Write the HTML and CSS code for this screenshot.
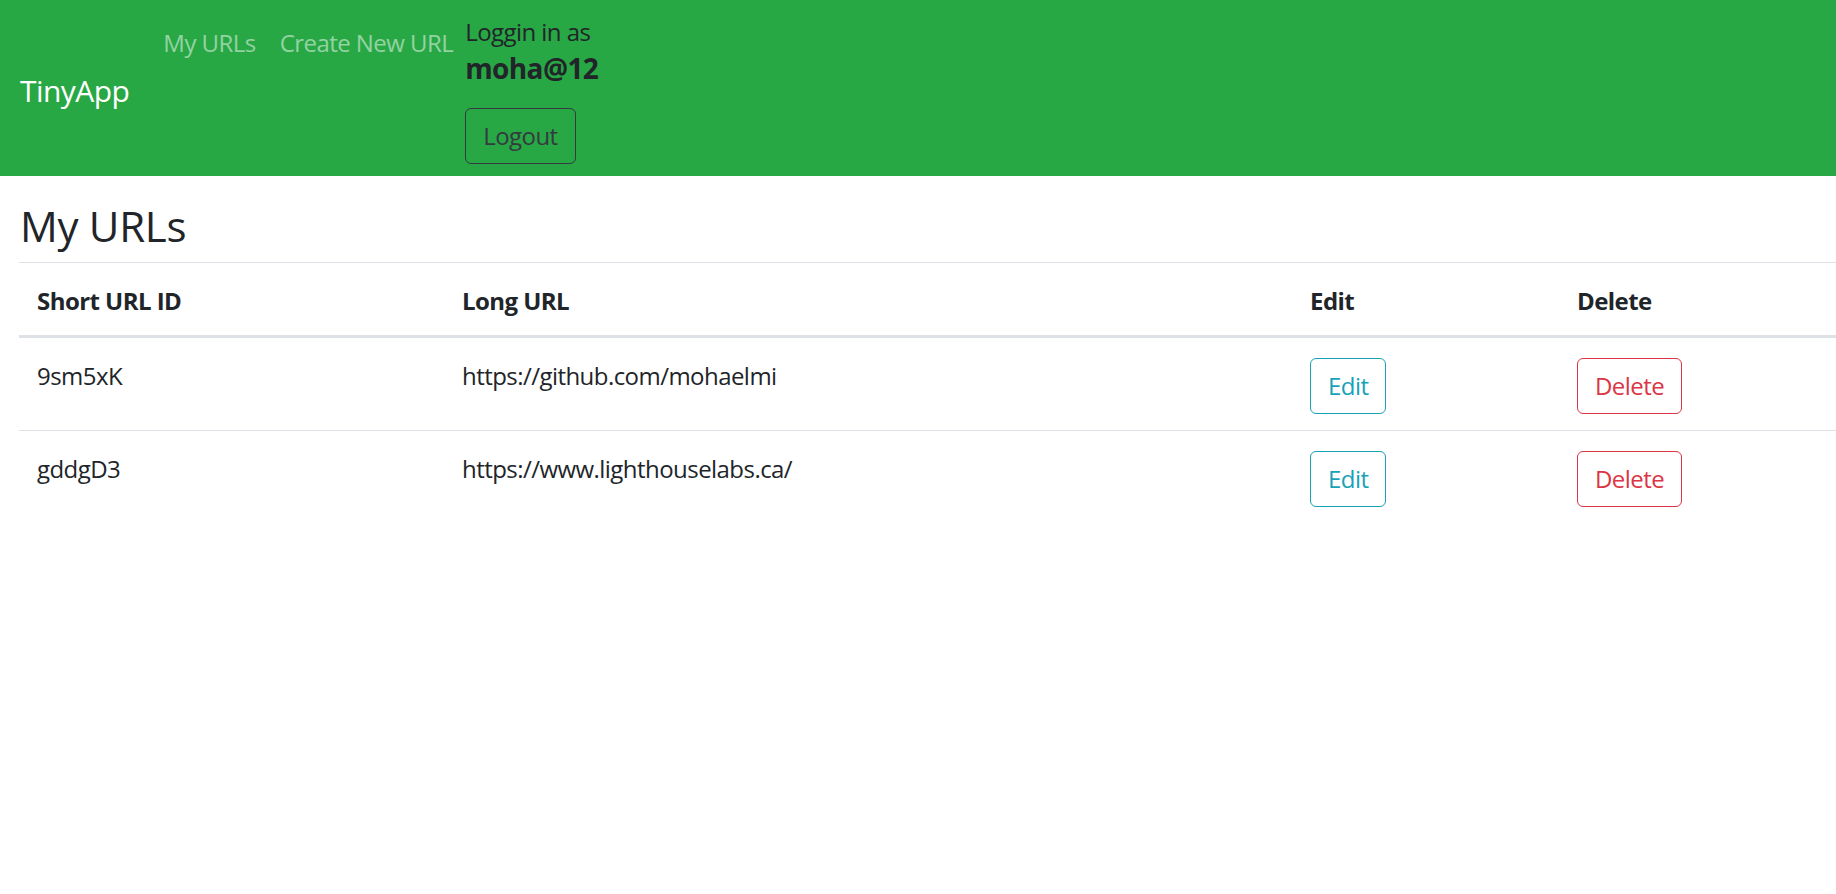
FILE: index.html
```html
<!DOCTYPE html>
<html lang="en">
<head>
<meta charset="utf-8">
<title>TinyApp</title>
<link rel="stylesheet" href="styles.css">
</head>
<body>
<nav class="navbar">
  <a class="brand" href="#">TinyApp</a>
  <ul class="nav-links">
    <li><a class="nav-link" href="#">My URLs</a></li>
    <li><a class="nav-link" href="#">Create New URL</a></li>
  </ul>
  <div class="login">
    <div class="login-label">Loggin in as</div>
    <div class="login-user">moha@12</div>
    <button class="btn btn-logout">Logout</button>
  </div>
</nav>
<main class="content">
  <h2 class="title">My URLs</h2>
  <table class="table">
    <colgroup>
      <col class="col-short">
      <col class="col-long">
      <col class="col-edit">
      <col class="col-delete">
    </colgroup>
    <thead>
      <tr>
        <th>Short URL ID</th>
        <th>Long URL</th>
        <th>Edit</th>
        <th>Delete</th>
      </tr>
    </thead>
    <tbody>
      <tr>
        <td>9sm5xK</td>
        <td>https://github.com/mohaelmi</td>
        <td><button class="btn btn-edit">Edit</button></td>
        <td><button class="btn btn-delete">Delete</button></td>
      </tr>
      <tr>
        <td>gddgD3</td>
        <td>https://www.lighthouselabs.ca/</td>
        <td><button class="btn btn-edit">Edit</button></td>
        <td><button class="btn btn-delete">Delete</button></td>
      </tr>
    </tbody>
  </table>
</main>
</body>
</html>
```
FILE: styles.css
```css
* { box-sizing: border-box; }

body {
  margin: 0;
  font-family: "Open Sans", "Noto Sans", "Liberation Sans", sans-serif;
  font-size: 24px;
  line-height: 36px;
  letter-spacing: -0.55px;
  color: #212529;
  background: #fff;
}

.navbar {
  display: flex;
  align-items: flex-start;
  background: #28a745;
  padding: 13px 20px 12px 20px;
}

.brand {
  align-self: center;
  margin-top: 3px;
  font-size: 30px;
  line-height: 45px;
  color: #fff;
  text-decoration: none;
  margin-right: 22px;
}

.nav-links {
  display: flex;
  list-style: none;
  margin: 0;
  padding: 0;
}

.nav-link {
  display: block;
  padding: 12px 12px;
  color: rgba(255, 255, 255, 0.5);
  text-decoration: none;
}

.login {
  display: flex;
  flex-direction: column;
  align-items: flex-start;
  padding-top: 1px;
}

.login-label { color: #212529; }

.login-user {
  font-size: 28px;
  font-weight: 700;
  line-height: 36px;
  letter-spacing: -0.6px;
  margin-bottom: 22px;
}

.btn {
  font-family: inherit;
  font-size: 24px;
  line-height: 36px;
  letter-spacing: -0.55px;
  padding: 9px 17px;
  border: 1px solid transparent;
  border-radius: 6px;
  background: transparent;
  cursor: pointer;
}

.btn-logout {
  color: #343a40;
  border-color: #343a40;
}

.btn-edit {
  color: #17a2b8;
  border-color: #17a2b8;
}

.btn-delete {
  color: #dc3545;
  border-color: #dc3545;
}

.content {
  padding-left: 19px;
}

.title {
  margin: 25px 0 11px 1px;
  font-size: 42px;
  font-weight: 500;
  line-height: 50px;
  letter-spacing: -0.3px;
}

.table {
  width: 100%;
  border-collapse: collapse;
  table-layout: fixed;
}

.col-short { width: 425px; }
.col-long { width: 848px; }
.col-edit { width: 267px; }
.col-delete { width: 277px; }

.table th,
.table td {
  padding: 20px 18px 16px 18px;
  text-align: left;
  vertical-align: top;
  border-top: 1px solid #dee2e6;
}

.table th {
  font-weight: 700;
  vertical-align: bottom;
  border-bottom: 3px solid #dee2e6;
}
```
